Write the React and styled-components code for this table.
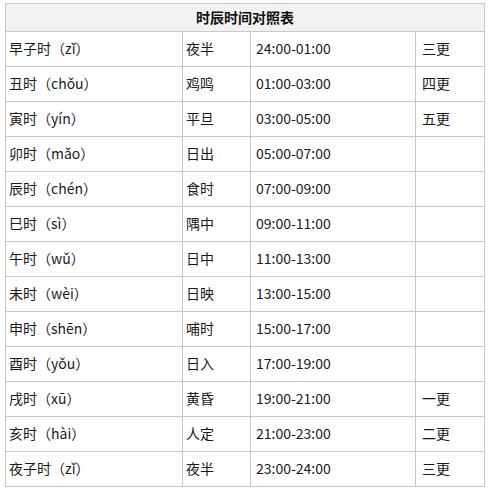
import React from "react";
import styled, { createGlobalStyle } from "styled-components";

const GlobalStyle = createGlobalStyle`
  html, body {
    margin: 0;
    padding: 0;
    background: #ffffff;
  }
  body {
    font-family: "Noto Sans CJK SC", "Noto Sans", sans-serif;
  }
`;

const Page = styled.div`
  padding: 3px 0 0 5px;
`;

const Table = styled.div`
  display: grid;
  grid-template-columns: 177px 68px 165px 69px;
  width: 480px;
  box-sizing: border-box;
  border-left: 1px solid #c8c8c8;
  border-top: 1px solid #c8c8c8;
`;

const Caption = styled.div`
  grid-column: 1 / -1;
  box-sizing: border-box;
  height: 28px;
  display: flex;
  align-items: center;
  justify-content: center;
  padding-bottom: 1px;
  background: #f2f2f2;
  border-right: 1px solid #c8c8c8;
  border-bottom: 1px solid #c8c8c8;
  font-size: 14px;
  font-weight: 700;
  color: #111;
`;

const Cell = styled.div`
  box-sizing: border-box;
  height: 35px;
  display: flex;
  align-items: center;
  padding: 0 0 2px ${(p) => p.$pad || 3}px;
  border-right: 1px solid #c8c8c8;
  border-bottom: 1px solid #c8c8c8;
  font-size: 14px;
  color: #1a1a1a;
  white-space: nowrap;
  overflow: hidden;
`;

const rows = [
  ["早子时（zǐ）", "夜半", "24:00-01:00", "三更"],
  ["丑时（chǒu）", "鸡鸣", "01:00-03:00", "四更"],
  ["寅时（yín）", "平旦", "03:00-05:00", "五更"],
  ["卯时（mǎo）", "日出", "05:00-07:00", ""],
  ["辰时（chén）", "食时", "07:00-09:00", ""],
  ["巳时（sì）", "隅中", "09:00-11:00", ""],
  ["午时（wǔ）", "日中", "11:00-13:00", ""],
  ["未时（wèi）", "日映", "13:00-15:00", ""],
  ["申时（shēn）", "哺时", "15:00-17:00", ""],
  ["酉时（yǒu）", "日入", "17:00-19:00", ""],
  ["戌时（xū）", "黄昏", "19:00-21:00", "一更"],
  ["亥时（hài）", "人定", "21:00-23:00", "二更"],
  ["夜子时（zǐ）", "夜半", "23:00-24:00", "三更"],
];

const pads = [3, 3, 5, 6];

export default function App() {
  return (
    <>
      <GlobalStyle />
      <Page>
        <Table>
          <Caption>时辰时间对照表</Caption>
          {rows.map((r, i) =>
            r.map((v, j) => (
              <Cell key={`${i}-${j}`} $pad={pads[j]}>
                {v}
              </Cell>
            ))
          )}
        </Table>
      </Page>
    </>
  );
}
